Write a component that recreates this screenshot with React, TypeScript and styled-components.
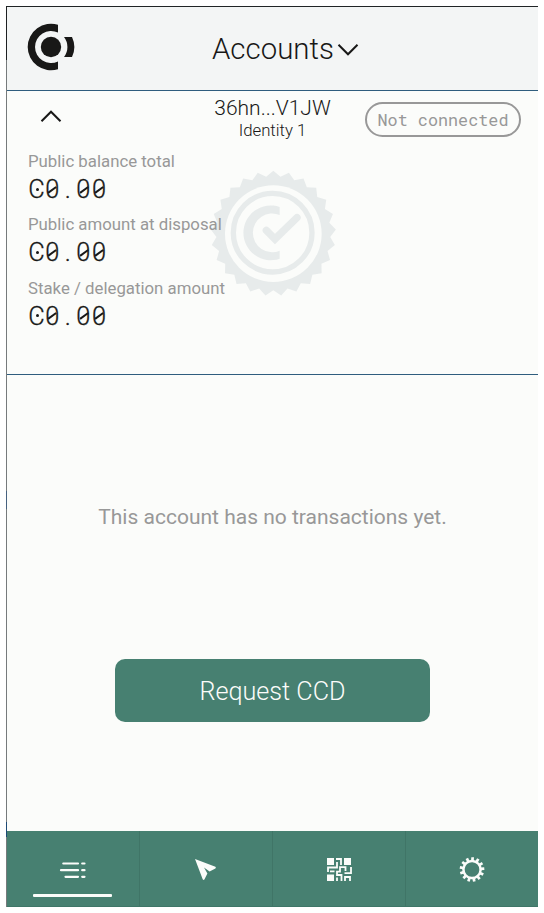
import React from 'react';
import styled, { createGlobalStyle } from 'styled-components';

const GlobalStyle = createGlobalStyle`
  *, *::before, *::after { box-sizing: border-box; }
  body { margin: 0; background: #fff; font-family: Roboto, sans-serif; color: #181817; }
`;

const Page = styled.main`
  width: 544px;
  height: 913px;
  padding: 6px;
  background: #fff;
`;

const Popup = styled.div`
  width: 532px;
  height: 901px;
  display: grid;
  grid-template-columns: 1px 531px;
`;

const Edge = styled.div`
  background: linear-gradient(#1d2022 0 54px, #767a7c 54px 485px, #46617f 485px 503px, #767a7c 503px 816px, #1d4a76 816px 831px, #767a7c 831px);
`;

const Screen = styled.div`
  display: flex;
  flex-direction: column;
  height: 901px;
  border-top: 1px solid #202426;
  background: #fbfcfa;
`;

const Header = styled.header`
  height: 84px;
  display: grid;
  grid-template-columns: 205px 1fr;
  align-items: center;
  background: #f3f5f5;
  border-bottom: 1px solid #2f5d7e;
`;

const Logo = styled.svg`
  width: 48px;
  height: 48px;
  margin: -2.5px 0 0 20px;
`;

const Title = styled.h1`
  margin: 0;
  display: flex;
  align-items: center;
  gap: 3px;
  font-size: 29.4px;
  font-weight: 300;
  line-height: 40px;
`;

const Chevron = styled.svg<{ $up?: boolean }>`
  width: 22px;
  height: 14px;
  transform: ${p => (p.$up ? 'rotate(180deg)' : 'translateY(1px)')};
`;

const AccountPanel = styled.section`
  height: 284px;
  position: relative;
  border-bottom: 1px solid #2f5d7e;
`;

const AccountBar = styled.div`
  height: 58px;
  display: grid;
  grid-template-columns: 1fr 178px 1fr;
  align-items: start;
`;

const Collapse = styled.button`
  justify-self: start;
  display: flex;
  padding: 0;
  margin: 18px 0 0 33px;
  border: 0;
  background: none;
`;

const Identity = styled.div`
  display: flex;
  flex-direction: column;
  align-items: center;
  padding-top: 5px;
  font-weight: 300;
`;

const Address = styled.span`
  font-size: 21px;
  line-height: 25px;
`;

const IdentityName = styled.span`
  font-size: 16.8px;
  line-height: 18px;
`;

const Status = styled.span`
  justify-self: end;
  width: 156px;
  height: 35px;
  margin: 11px 17px 0 0;
  border: 2px solid #989898;
  border-radius: 18px;
  color: #989898;
  font: 16.8px/31px 'Roboto Mono', 'Liberation Mono', monospace;
  text-align: center;
  white-space: nowrap;
`;

const Balances = styled.dl`
  position: relative;
  margin: 0;
  padding: 2px 0 0 21px;
`;

const Balance = styled.div`
  height: 63.4px;
`;

const Label = styled.dt`
  font-size: 16.8px;
  line-height: 20px;
  color: #989898;
`;

const Amount = styled.dd`
  display: flex;
  margin: 1px 0 0 0.8px;
  font-size: 25.4px;
  font-weight: 300;
  line-height: 34px;
  -webkit-text-stroke: 0.3px currentColor;
`;

const Digit = styled.span<{ $mark?: 'slash' | 'dot' }>`
  position: relative;
  display: flex;
  justify-content: center;
  width: 15.6px;
  &::after {
    content: ${p => (p.$mark ? "''" : 'none')};
    position: absolute;
    left: ${p => (p.$mark === 'dot' ? '7px' : '3px')};
    top: ${p => (p.$mark === 'dot' ? '15.5px' : '16.5px')};
    width: ${p => (p.$mark === 'dot' ? '3px' : '10px')};
    height: ${p => (p.$mark === 'dot' ? '3px' : '1.6px')};
    border-radius: ${p => (p.$mark === 'dot' ? '50%' : '0')};
    background: currentColor;
    transform: ${p => (p.$mark === 'slash' ? 'rotate(-36deg)' : 'none')};
  }
`;

const Seal = styled.svg`
  position: absolute;
  left: 203px;
  top: 78.6px;
  width: 126.67px;
  height: 126.67px;
`;

const Transactions = styled.section`
  flex: 1;
  display: flex;
  flex-direction: column;
  align-items: center;
`;

const Empty = styled.p`
  margin: 127px 0 0;
  font-size: 21px;
  line-height: 30px;
  color: #989898;
`;

const RequestButton = styled.button`
  width: 315px;
  height: 63px;
  margin-top: 127px;
  padding: 2px 0 0;
  border: 0;
  border-radius: 10px;
  background: #478071;
  color: #fbfcfa;
  font: 300 25.2px Roboto, sans-serif;
`;

const Nav = styled.nav`
  height: 76px;
  display: grid;
  grid-template-columns: 132px 133px 133px 1fr;
  background: #478071;
  border-bottom: 1px solid #3f7668;
`;

const NavItem = styled.a`
  display: flex;
  flex-direction: column;
  align-items: center;
  padding-top: 25px;
  & + & { border-left: 1px solid #407567; }
`;

const NavIcon = styled.svg`
  width: 28px;
  height: 28px;
`;

const Underline = styled.span`
  width: 79px;
  height: 3px;
  margin: 10px 1px 0 0;
  border-radius: 1px;
  background: #fbfcfa;
`;

const point = (angle: number, r: number, cx: number, cy: number) => {
  const a = (angle * Math.PI) / 180;
  return `${(cx + r * Math.sin(a)).toFixed(2)},${(cy - r * Math.cos(a)).toFixed(2)}`;
};

const sealEdge = Array.from({ length: 50 }, (_, i) =>
  point(i * 7.2, i % 2 ? 171 : 188, 235, 233)).join(' ');

const balances = ['Public balance total', 'Public amount at disposal', 'Stake / delegation amount'];

const ChevronIcon = ({ up }: { up?: boolean }) => (
  <Chevron $up={up} viewBox="0 0 22 14">
    <path d="M1.5 1.8 11 11.3 20.5 1.8" fill="none" stroke="#181817" strokeWidth="2" />
  </Chevron>
);

export default function App() {
  return (
    <Page>
      <GlobalStyle />
      <Popup>
        <Edge />
        <Screen>
          <Header>
            <Logo viewBox="81 69 144 144">
              <g fill="#181817">
                <path d="M174 74.2A70 70 0 1 0 174 207.8V184.2A48 48 0 1 1 174 97.8Z" />
                <circle cx="153" cy="141" r="30.5" />
                <path d="M192 111H216A70 70 0 0 1 216 171H192A49 49 0 0 0 192 111Z" />
              </g>
            </Logo>
            <Title>Accounts <ChevronIcon /></Title>
          </Header>
          <AccountPanel>
            <Seal viewBox="45 43 380 380">
              <polygon points={sealEdge} fill="#e7ebeb" />
              <circle cx="235" cy="234" r="145" fill="#fbfcfa" />
              <circle cx="233" cy="231" r="118" fill="none" stroke="#e7ebeb" strokeWidth="16" />
              <path d="M254 154A82 82 0 1 0 254 309V285A58 58 0 1 1 254 178Z" fill="#e7ebeb" />
              <path d="M214 224 240 250 306 186" fill="none" stroke="#e7ebeb" strokeWidth="22" strokeLinecap="round" />
            </Seal>
            <AccountBar>
              <Collapse aria-label="Collapse"><ChevronIcon up /></Collapse>
              <Identity>
                <Address>36hn...V1JW</Address>
                <IdentityName>Identity 1</IdentityName>
              </Identity>
              <Status>Not connected</Status>
            </AccountBar>
            <Balances>
              {balances.map(label => (
                <Balance key={label}>
                  <Label>{label}</Label>
                  <Amount>
                    <Digit $mark="dot">C</Digit>
                    <Digit $mark="slash">0</Digit>
                    <Digit>.</Digit>
                    <Digit $mark="slash">0</Digit>
                    <Digit $mark="slash">0</Digit>
                  </Amount>
                </Balance>
              ))}
            </Balances>
          </AccountPanel>
          <Transactions>
            <Empty>This account has no transactions yet.</Empty>
            <RequestButton>Request CCD</RequestButton>
          </Transactions>
          <Nav>
            <NavItem>
              <NavIcon viewBox="0 0 28 28">
                <path d="M4.3 7.5H19M23.2 7.5H25.5M2 14.2H19M23.2 14.2H25.5M6.5 20.8H19M23.2 20.8H25.5" stroke="#fbfcfa" strokeWidth="2.2" strokeLinecap="round" />
              </NavIcon>
              <Underline />
            </NavItem>
            <NavItem>
              <NavIcon viewBox="0 0 28 28">
                <path d="M3 3 23.4 10.7Q24.4 11.5 23.4 12.5L17.6 15.5 12 11.4 15.4 17.5 12.4 23.5Q11.4 24.5 10.7 23.2Z" fill="#fbfcfa" />
              </NavIcon>
            </NavItem>
            <NavItem>
              <NavIcon viewBox="0 0 28 28">
                <path d="M2 2H9V9H2ZM19 2H26V9H19ZM2 18.4H9V25H2Z" fill="#fbfcfa" />
                <path d="M11 3H16V9M12 6V11.5H3V16M5 15.3H9.5M26 11V17.2H19.5M20.5 15V11.2H15V15.7H12V19H16.5V25M12 21.5V25M20 25V21H25V25" fill="none" stroke="#fbfcfa" strokeWidth="1.8" />
              </NavIcon>
            </NavItem>
            <NavItem>
              <NavIcon viewBox="0 0 28 28">
                <g fill="none" stroke="#fbfcfa" transform="rotate(3 14 13.5)">
                  <circle cx="14" cy="13.5" r="8.6" strokeWidth="2.5" />
                  {Array.from({ length: 13 }, (_, i) => (
                    <path key={i} d="M14 1.2V5" strokeWidth="2.7" transform={`rotate(${(i * 360) / 13} 14 13.5)`} />
                  ))}
                </g>
              </NavIcon>
            </NavItem>
          </Nav>
        </Screen>
      </Popup>
    </Page>
  );
}
